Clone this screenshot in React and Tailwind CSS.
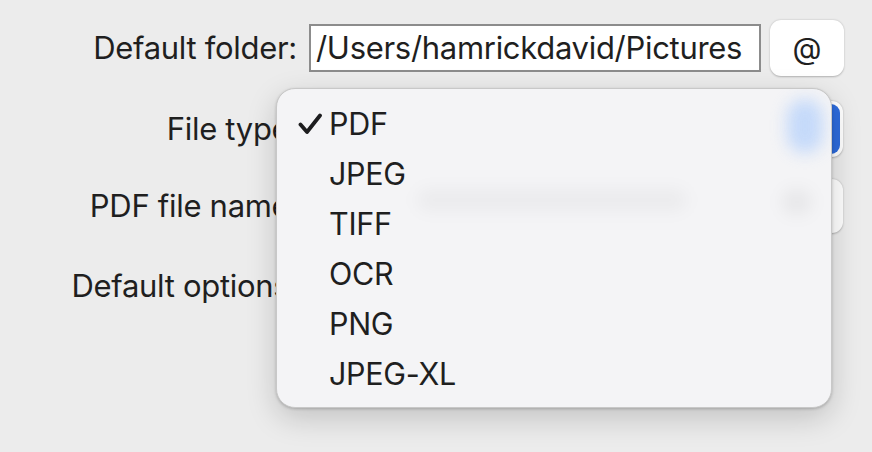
import React from 'react'

const items = ['PDF', 'JPEG', 'TIFF', 'OCR', 'PNG', 'JPEG-XL']

const Check = () => (
  <svg width="25" height="22" viewBox="0 0 25 22" className="block">
    <path d="M2.5 11.5 L9 19 L22 2.5" fill="none" stroke="#1d1d1f" strokeWidth="3.8" strokeLinecap="round" strokeLinejoin="round" />
  </svg>
)

const App = () => {
  return (
    <div className="relative w-[872px] h-[452px] overflow-hidden bg-[#ececec] text-[#1f1f1f] font-['Inter','Liberation_Sans',sans-serif]">
      {/* Form rows */}
      <div className="flex flex-col pt-[20px]">
        <div className="flex items-center h-[56px]">
          <div className="w-[298px] text-right text-[31px] tracking-[-0.3px] pr-[1px] whitespace-nowrap">Default folder:</div>
          <div className="ml-[11px] w-[452px] h-[48px] bg-white border-2 border-[#8c8c8c] flex items-center px-[5px] text-[31px] tracking-[-0.3px] whitespace-nowrap overflow-hidden">
            /Users/hamrickdavid/Pictures
          </div>
          <div className="ml-[9px] w-[74px] h-[56px] rounded-[11px] bg-white shadow-[0_0.5px_2px_rgba(0,0,0,0.25)] flex items-center justify-center text-[30px]">
            @
          </div>
        </div>

        <div className="flex items-center h-[56px] mt-[25px]">
          <div className="w-[298px] text-right text-[31px] tracking-[-0.3px] whitespace-nowrap">File type:</div>
          <div className="ml-auto mr-[29px] w-[520px] h-[56px] rounded-[11px] bg-white shadow-[0_0.5px_2px_rgba(0,0,0,0.25)] flex justify-end p-[3px]">
            <div className="w-[40px] h-full rounded-[9px] bg-[#2d6bdc]" />
          </div>
        </div>

        <div className="flex items-center h-[54px] mt-[22px]">
          <div className="w-[298px] text-right text-[31px] tracking-[-0.3px] whitespace-nowrap">PDF file name:</div>
          <div className="ml-auto mr-[29px] w-[520px] h-[54px] rounded-[11px] bg-white shadow-[0_0.5px_2px_rgba(0,0,0,0.25)]" />
        </div>

        <div className="flex items-center h-[56px] mt-[25px]">
          <div className="w-[298px] text-right text-[31px] tracking-[-0.3px] whitespace-nowrap">Default options:</div>
        </div>
      </div>

      {/* Popup menu */}
      <div className="absolute left-[276px] top-[88px] w-[556px] h-[320px] rounded-[19px] bg-[#f4f4f6] border border-[#c8c8c8] shadow-[0_10px_30px_rgba(0,0,0,0.18),0_1px_3px_rgba(0,0,0,0.2)] overflow-hidden">
        <div className="absolute left-[510px] top-[10px] w-[36px] h-[54px] rounded-full bg-[#b9d3fb] blur-[8px] opacity-80" />
        <div className="absolute left-[140px] top-[100px] w-[270px] h-[22px] rounded-full bg-black/[0.035] blur-[8px]" />
        <div className="absolute left-[505px] top-[100px] w-[30px] h-[26px] rounded-full bg-black/[0.05] blur-[8px]" />
        <div className="relative flex flex-col pt-[10px]">
          {items.map((item, i) => (
            <div key={item} className="flex items-center h-[50px]">
              <div className="w-[52px] flex justify-end pr-[6px]">
                {i === 0 && <Check />}
              </div>
              <span className="text-[30.5px] tracking-[-0.3px] leading-none">{item}</span>
            </div>
          ))}
        </div>
      </div>
    </div>
  )
}

export default App
